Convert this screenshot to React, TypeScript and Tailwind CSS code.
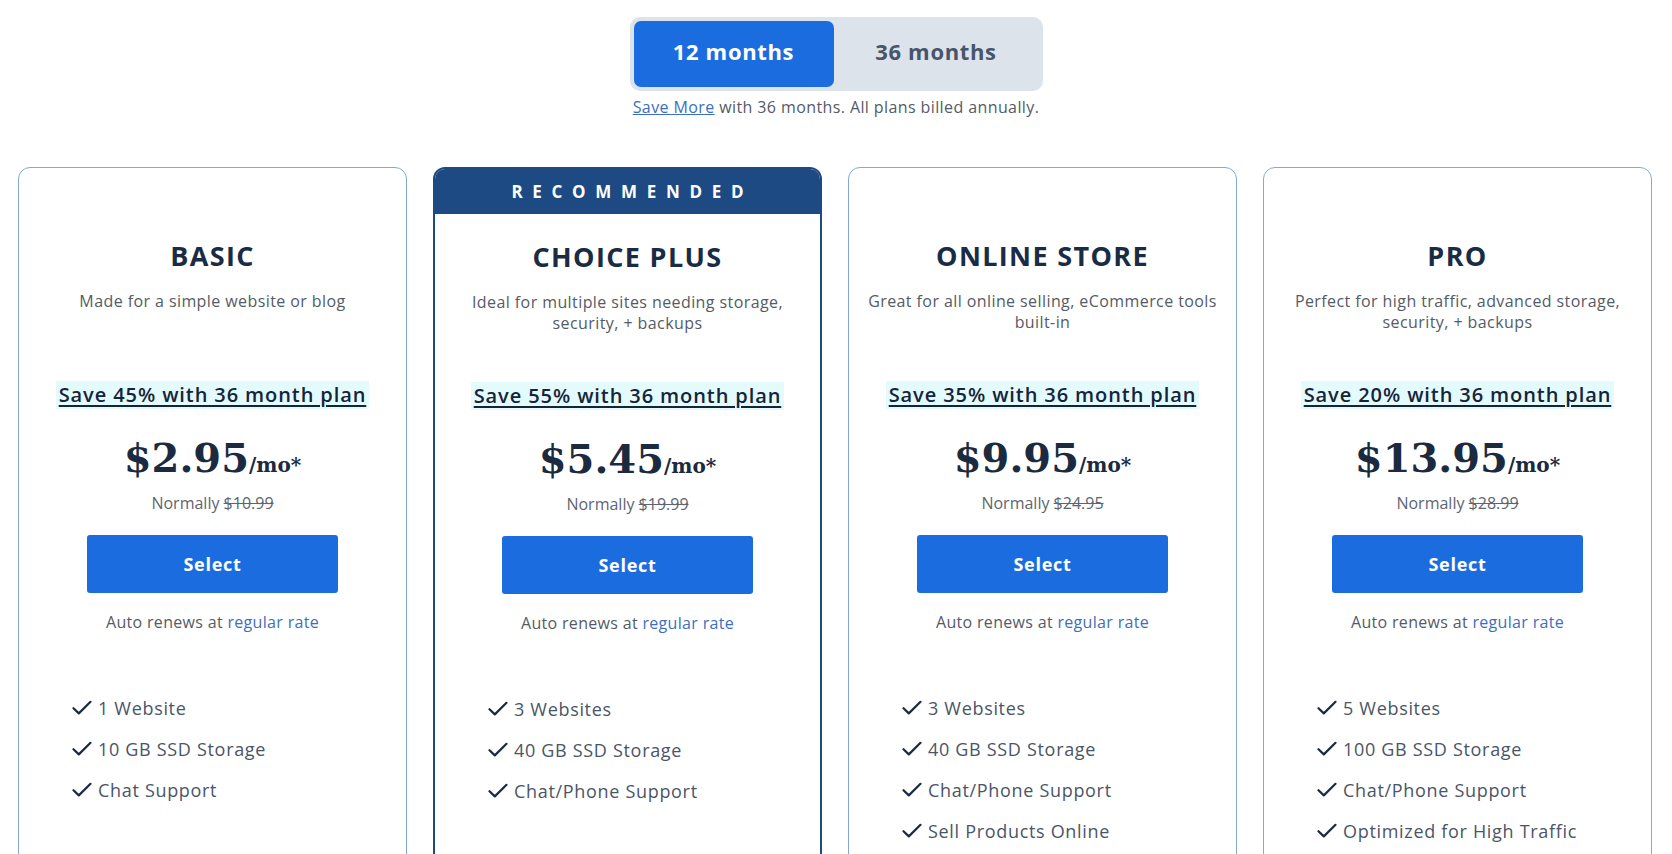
import React from "react";

type Plan = {
  name: string;
  desc: string;
  save: string;
  price: string;
  normally: string;
  features: string[];
  recommended?: boolean;
};

const plans: Plan[] = [
  {
    name: "BASIC",
    desc: "Made for a simple website or blog",
    save: "Save 45% with 36 month plan",
    price: "$2.95",
    normally: "$10.99",
    features: ["1 Website", "10 GB SSD Storage", "Chat Support"],
  },
  {
    name: "CHOICE PLUS",
    desc: "Ideal for multiple sites needing storage, security, + backups",
    save: "Save 55% with 36 month plan",
    price: "$5.45",
    normally: "$19.99",
    features: ["3 Websites", "40 GB SSD Storage", "Chat/Phone Support"],
    recommended: true,
  },
  {
    name: "ONLINE STORE",
    desc: "Great for all online selling, eCommerce tools built-in",
    save: "Save 35% with 36 month plan",
    price: "$9.95",
    normally: "$24.95",
    features: [
      "3 Websites",
      "40 GB SSD Storage",
      "Chat/Phone Support",
      "Sell Products Online",
    ],
  },
  {
    name: "PRO",
    desc: "Perfect for high traffic, advanced storage, security, + backups",
    save: "Save 20% with 36 month plan",
    price: "$13.95",
    normally: "$28.99",
    features: [
      "5 Websites",
      "100 GB SSD Storage",
      "Chat/Phone Support",
      "Optimized for High Traffic",
    ],
  },
];

function CheckMark() {
  return (
    <svg width="20" height="16" viewBox="0 0 20 16" fill="none" className="shrink-0">
      <path
        d="M1.5 8.2 L6.8 13.4 L18.5 1.8"
        stroke="#1b2a44"
        strokeWidth="2.2"
        strokeLinecap="round"
        strokeLinejoin="round"
      />
    </svg>
  );
}

function PlanCard({ plan }: { plan: Plan }) {
  return (
    <div
      className={`flex flex-col h-[760px] rounded-[12px] bg-white overflow-hidden ${
        plan.recommended ? "border-2 border-[#1d4a83]" : "border border-[#84a9d6]"
      }`}
    >
      {/* header strip */}
      {plan.recommended ? (
        <div className="h-[45px] bg-[#1d4a83] flex items-center justify-center text-white text-[17px] font-bold tracking-[0.57em] pl-[0.57em]">
          RECOMMENDED
        </div>
      ) : (
        <div className="h-[45px]" />
      )}

      <div className="flex flex-col items-center text-center pt-[27px]">
        <h2 className="text-[27px] leading-[32px] font-bold tracking-[0.05em] text-[#1a2b44]">
          {plan.name}
        </h2>
        <p className="mt-[19px] h-[42px] max-w-[352px] text-[16px] leading-[21px] tracking-[0.026em] text-[#545b66]">
          {plan.desc}
        </p>

        <div className="mt-[48px] h-[28px] px-[3px] bg-[#e4fbfd] text-[20px] leading-[28px] font-semibold tracking-[0.045em] text-[#16243a] underline underline-offset-[3px]">
          {plan.save}
        </div>

        <div className="mt-[29px] flex items-baseline text-[#1b2a3f] font-bold font-['DejaVu_Serif',serif]">
          <span className="text-[40px] leading-[40px]">{plan.price}</span>
          <span className="text-[20px] leading-[40px]">/mo*</span>
        </div>

        <div className="mt-[8px] text-[16px] leading-[20px] text-[#5d6570]">
          Normally <span className="line-through">{plan.normally}</span>
        </div>

        <button className="mt-[22px] w-[251px] h-[58px] rounded-[3px] bg-[#1b6ddf] text-white text-[18px] font-bold tracking-[0.04em]">
          Select
        </button>

        <div className="mt-[19px] text-[16px] leading-[20px] tracking-[0.02em] text-[#545b66]">
          Auto renews at <span className="text-[#3d6fc0]">regular rate</span>
        </div>

        <ul className="self-stretch mt-[64px] pl-[53px] flex flex-col gap-[17px] text-left">
          {plan.features.map((f) => (
            <li key={f} className="flex items-center gap-[6px] h-[24px] text-[18px] tracking-[0.038em] text-[#4a5568]">
              <CheckMark />
              {f}
            </li>
          ))}
        </ul>
      </div>
    </div>
  );
}

export default function App() {
  return (
    <div className="h-screen overflow-hidden bg-white font-['Open_Sans',sans-serif]">
      <div className="flex flex-col items-center pt-[17px]">
        {/* term toggle */}
        <div className="flex w-[413px] h-[74px] p-[4px] rounded-[10px] bg-[#dde3ea]">
          <button className="w-[200px] pb-[5px] rounded-[7px] bg-[#1b6ddf] text-white text-[22px] font-bold tracking-[0.03em]">
            12 months
          </button>
          <button className="flex-1 pb-[5px] text-[#475569] text-[22px] font-bold tracking-[0.03em]">
            36 months
          </button>
        </div>
        <p className="mt-[6px] text-[16px] leading-[20px] tracking-[0.025em] text-[#545b66]">
          <a className="text-[#3b6fc1] underline">Save More</a> with 36 months. All plans billed annually.
        </p>
      </div>

      <div className="grid grid-cols-4 gap-[26px] pl-[18px] pr-[20px] mt-[50px]">
        {plans.map((p) => (
          <PlanCard key={p.name} plan={p} />
        ))}
      </div>
    </div>
  );
}
